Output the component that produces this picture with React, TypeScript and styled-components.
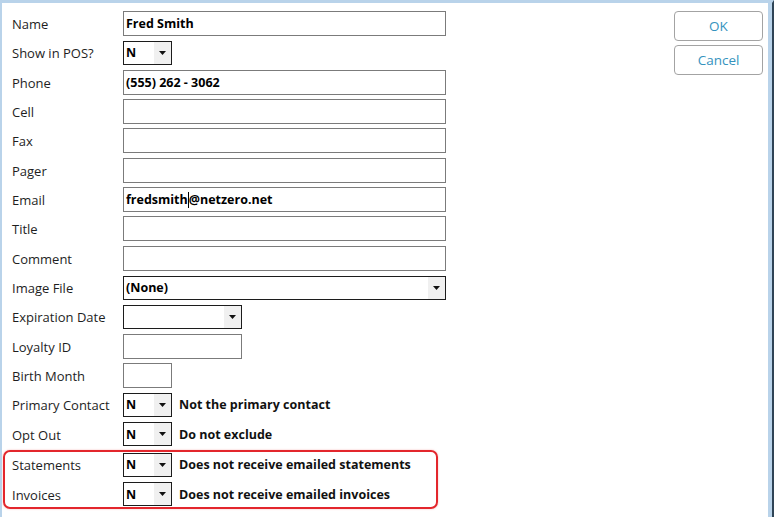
import React from "react";
import styled, { createGlobalStyle } from "styled-components";

const Global = createGlobalStyle`
  html, body { margin: 0; padding: 0; background: #ffffff; }
  body { font-family: "Open Sans", "Noto Sans", sans-serif; }
`;

const Frame = styled.div`
  width: 774px;
  height: 517px;
  box-sizing: border-box;
  border-top: 3px solid #b9d3ea;
  border-left: 2px solid #b9d3ea;
  border-right: 2px solid #2f4456;
  background: #ffffff;
  display: flex;
  overflow: hidden;
`;

const Inner = styled.div`
  flex: 1;
  display: flex;
  border-right: 4px solid #b9d3ea;
  min-width: 0;
`;

const Form = styled.div`
  flex: 1;
  display: flex;
  flex-direction: column;
  gap: 4.35px;
  padding: 8px 0 0 10px;
`;

const Row = styled.div`
  display: flex;
  align-items: center;
  height: 25px;
`;

const Label = styled.div`
  width: 111px;
  flex: none;
  font-size: 13px;
  color: #1e1e1e;
  padding-top: 1px;
`;

const TextBox = styled.div<{ $w: number }>`
  width: ${(p) => p.$w}px;
  height: 25px;
  box-sizing: border-box;
  border: 1px solid #7b7b7b;
  background: #fff;
  display: flex;
  align-items: center;
  padding: 0 2px;
  font-size: 12.5px;
  font-weight: 700;
  color: #000;
  white-space: nowrap;
`;

const Caret = styled.span`
  display: inline-block;
  width: 1px;
  height: 16px;
  background: #000;
  vertical-align: middle;
`;

const Select = styled.div<{ $w: number }>`
  width: ${(p) => p.$w}px;
  height: 24px;
  box-sizing: border-box;
  border: 1px solid #1c1c1c;
  background: #fff;
  display: flex;
  align-items: stretch;
  font-size: 12.5px;
  font-weight: 700;
  color: #000;
`;

const SelectValue = styled.div`
  flex: 1;
  display: flex;
  align-items: center;
  padding-left: 2px;
`;

const DropButton = styled.div`
  width: 17px;
  flex: none;
  background: #f0f0f0;
  display: flex;
  align-items: center;
  justify-content: center;
`;

const Note = styled.div`
  margin-left: 7px;
  font-size: 12.5px;
  font-weight: 700;
  color: #111;
`;

const Highlight = styled.div`
  width: 435px;
  box-sizing: border-box;
  margin: -1px 0 0 -9px;
  padding: 0 0 0 7px;
  border: 2px solid #e3262c;
  border-radius: 7px;
  box-shadow: 0 0 2px rgba(227, 38, 44, 0.35);
  display: flex;
  flex-direction: column;
  gap: 4.35px;
`;

const Buttons = styled.div`
  width: 89px;
  display: flex;
  flex-direction: column;
  gap: 4px;
  padding: 8px 5px 0 0;
`;

const Button = styled.button<{ $h: number }>`
  height: ${(p) => p.$h}px;
  box-sizing: border-box;
  border: 1px solid #a3a3a3;
  border-radius: 4px;
  background: #fff;
  color: #3593be;
  font-family: "Open Sans", "Noto Sans", sans-serif;
  font-size: 13.5px;
  font-weight: 400;
  padding: 0;
`;

const Arrow = () => (
  <svg width="7" height="4" viewBox="0 0 7 4">
    <path d="M0 0 H7 L3.5 4 Z" fill="#111" />
  </svg>
);

const Drop = ({ w, value }: { w: number; value: string }) => (
  <Select $w={w}>
    <SelectValue>{value}</SelectValue>
    <DropButton>
      <Arrow />
    </DropButton>
  </Select>
);

export default function App() {
  return (
    <>
      <Global />
      <Frame>
        <Inner>
          <Form>
            <Row>
              <Label>Name</Label>
              <TextBox $w={323}>Fred Smith</TextBox>
            </Row>
            <Row>
              <Label>Show in POS?</Label>
              <Drop w={49} value="N" />
            </Row>
            <Row>
              <Label>Phone</Label>
              <TextBox $w={323}>(555) 262 - 3062</TextBox>
            </Row>
            <Row>
              <Label>Cell</Label>
              <TextBox $w={323} />
            </Row>
            <Row>
              <Label>Fax</Label>
              <TextBox $w={323} />
            </Row>
            <Row>
              <Label>Pager</Label>
              <TextBox $w={323} />
            </Row>
            <Row>
              <Label>Email</Label>
              <TextBox $w={323}>
                fredsmith<Caret />@netzero.net
              </TextBox>
            </Row>
            <Row>
              <Label>Title</Label>
              <TextBox $w={323} />
            </Row>
            <Row>
              <Label>Comment</Label>
              <TextBox $w={323} />
            </Row>
            <Row>
              <Label>Image File</Label>
              <Drop w={323} value="(None)" />
            </Row>
            <Row>
              <Label>Expiration Date</Label>
              <Drop w={119} value="" />
            </Row>
            <Row>
              <Label>Loyalty ID</Label>
              <TextBox $w={119} />
            </Row>
            <Row>
              <Label>Birth Month</Label>
              <TextBox $w={49} />
            </Row>
            <Row>
              <Label>Primary Contact</Label>
              <Drop w={49} value="N" />
              <Note>Not the primary contact</Note>
            </Row>
            <Row>
              <Label>Opt Out</Label>
              <Drop w={49} value="N" />
              <Note>Do not exclude</Note>
            </Row>
            <Highlight>
              <Row>
                <Label>Statements</Label>
                <Drop w={49} value="N" />
                <Note>Does not receive emailed statements</Note>
              </Row>
              <Row>
                <Label>Invoices</Label>
                <Drop w={49} value="N" />
                <Note>Does not receive emailed invoices</Note>
              </Row>
            </Highlight>
          </Form>
          <Buttons>
            <Button $h={30}>OK</Button>
            <Button $h={30}>Cancel</Button>
          </Buttons>
        </Inner>
      </Frame>
    </>
  );
}
